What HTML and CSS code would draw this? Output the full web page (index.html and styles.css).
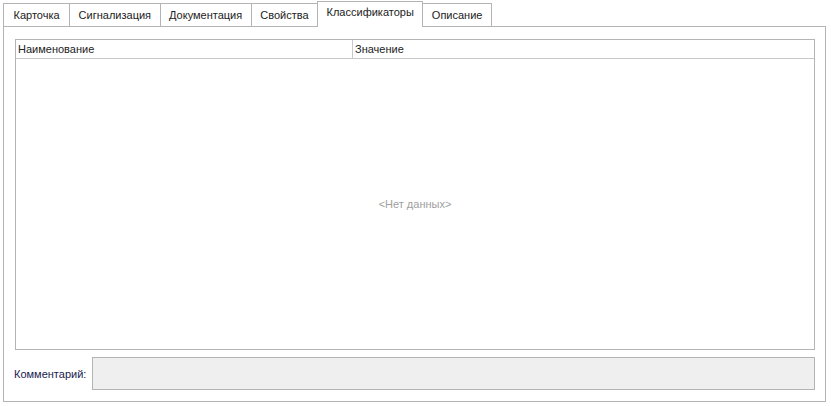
FILE: index.html
```html
<!doctype html>
<html lang="ru">
  <head>
    <meta charset="UTF-8" />
    <title>Классификаторы</title>
    <link rel="stylesheet" href="styles.css">
  </head>
  <body>
    <div class="window">
      <div class="tabs">
        <div class="tab">Карточка</div>
        <div class="tab">Сигнализация</div>
        <div class="tab">Документация</div>
        <div class="tab">Свойства</div>
        <div class="tab tab-active">Классификаторы</div>
        <div class="tab">Описание</div>
      </div>

      <div class="panel">
        <div class="grid">
          <div class="grid-head">
            <div class="grid-col grid-col-name">Наименование</div>
            <div class="grid-col">Значение</div>
          </div>
          <div class="grid-body">&lt;Нет данных&gt;</div>
        </div>

        <div class="comment-row">
          <label class="comment-label">Комментарий:</label>
          <div class="comment-box"></div>
        </div>
      </div>
    </div>
  </body>
</html>
```

FILE: styles.css
```css
* {
  margin: 0;
  padding: 0;
  box-sizing: border-box;
}

html,
body {
  height: 100%;
  background: #ffffff;
  font-family: "Liberation Sans", Arial, sans-serif;
  font-size: 11px;
  color: #222222;
}

.window {
  display: flex;
  flex-direction: column;
  height: 100%;
  padding: 1px 5px 4px 3px;
}

/* tab strip */
.tabs {
  display: flex;
  align-items: flex-end;
  height: 25px;
}

.tab {
  height: 23px;
  padding: 5px 8.5px 0;
  border: 1px solid #b4b4b4;
  border-bottom: none;
  margin-left: -1px;
  background: #ffffff;
  white-space: nowrap;
}

.tab:first-child {
  margin-left: 0;
  padding-left: 9.5px;
  padding-right: 9.5px;
}

.tab-active {
  position: relative;
  z-index: 1;
  height: 26px;
  margin-bottom: -1px;
  padding-top: 4px;
}

/* page body */
.panel {
  flex: 1;
  display: flex;
  flex-direction: column;
  border: 1px solid #b4b4b4;
  padding: 12px 10px 11px 11px;
}

.grid {
  flex: 1;
  display: flex;
  flex-direction: column;
  border: 1px solid #b4b4b4;
}

.grid-head {
  display: flex;
  height: 19px;
  border-bottom: 1px solid #c8c8c8;
}

.grid-col {
  flex: 1;
  padding: 3px 2px 0;
}

.grid-col-name {
  flex: 0 0 337px;
  border-right: 1px solid #c8c8c8;
}

.grid-body {
  flex: 1;
  display: flex;
  align-items: center;
  justify-content: center;
  color: #a0a0a0;
}

.comment-row {
  display: flex;
  align-items: center;
  margin-top: 7px;
  height: 33px;
}

.comment-label {
  flex: 0 0 78px;
  margin-left: -1px;
  color: #1a1a50;
}

.comment-box {
  flex: 1;
  height: 100%;
  background: #efefef;
  border: 1px solid #b4b4b4;
}
```
